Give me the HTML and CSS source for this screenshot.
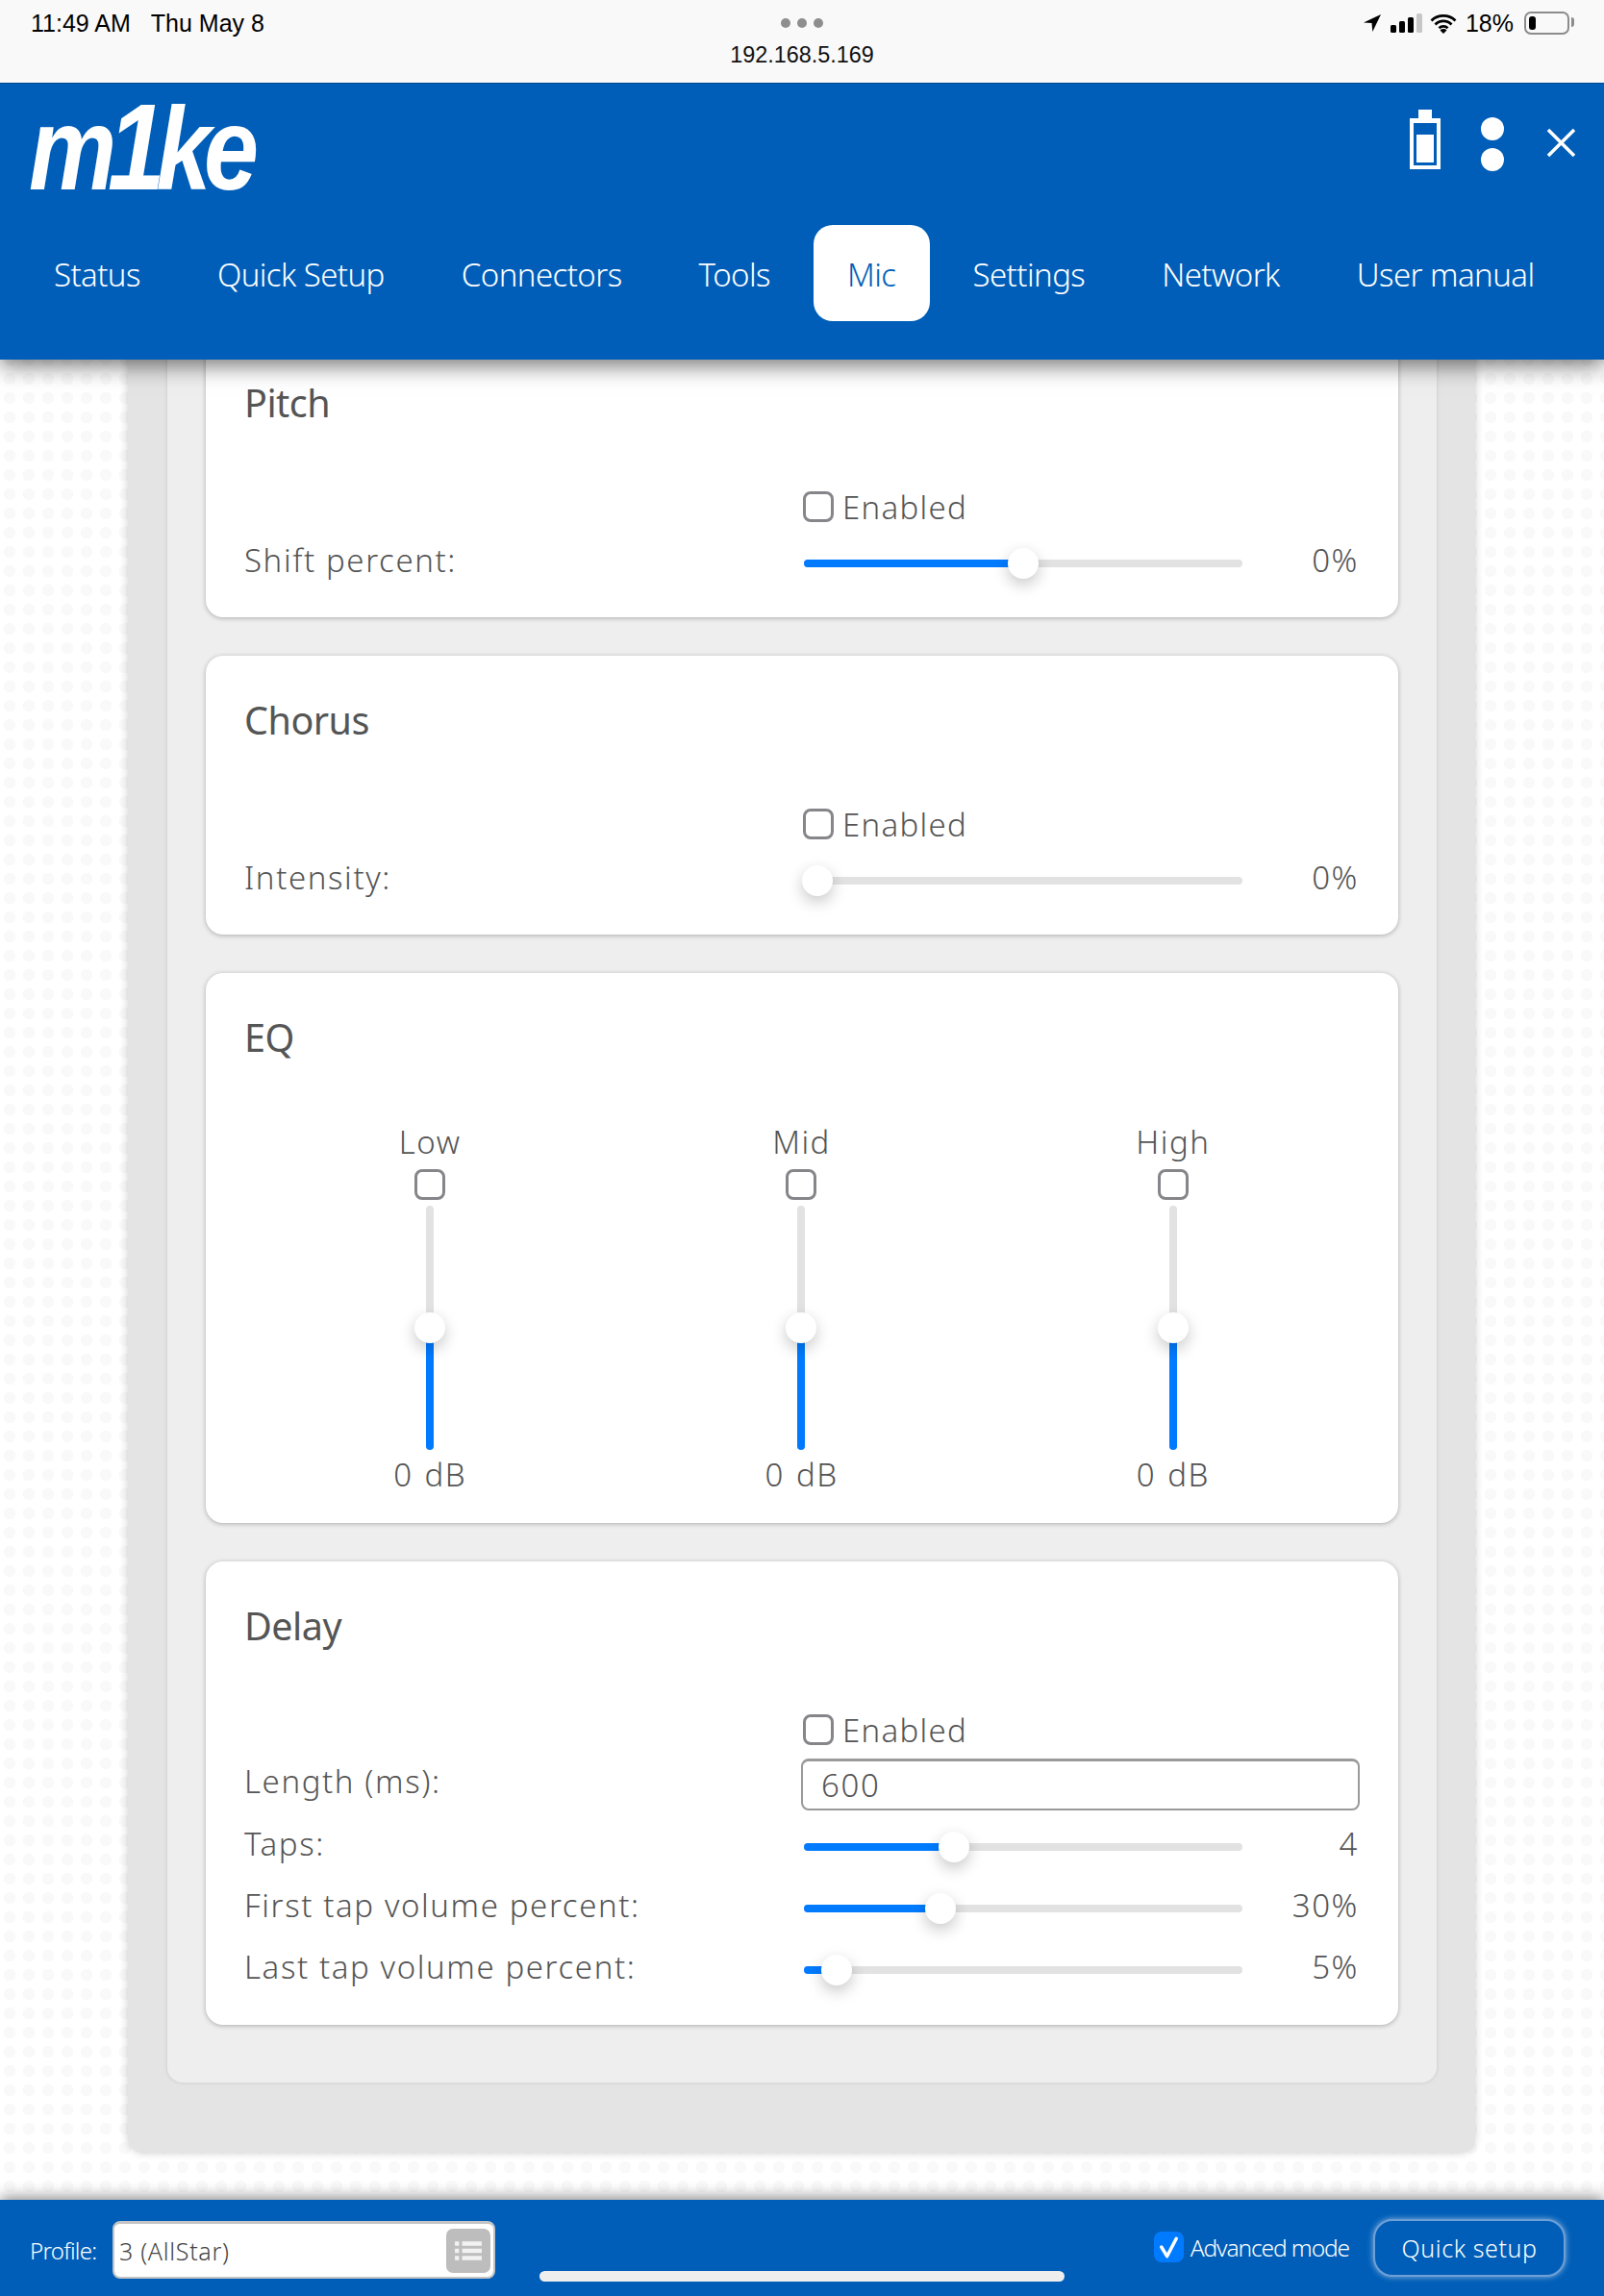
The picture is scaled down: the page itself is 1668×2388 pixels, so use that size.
FILE: index.html
```html
<!DOCTYPE html>
<html lang="en">
<head>
<meta charset="utf-8">
<title>m1ke</title>
<link rel="stylesheet" href="styles.css">
</head>
<body>
<div class="app">
  <div class="statusbar">
    <div class="sb-left"><span>11:49 AM</span><span>Thu May 8</span></div>
    <div class="sb-center">
      <div class="sb-dots"><i></i><i></i><i></i></div>
      <div class="sb-url">192.168.5.169</div>
    </div>
    <div class="sb-right">
      <svg class="ic-loc" viewBox="0 0 20 20"><path d="M19 1 1 9.500l8.500.6.8 8.900z" fill="#000"/></svg>
      <svg class="ic-signal" viewBox="0 0 33 20"><rect x="0" y="12" width="6" height="8" rx="1.500" fill="#000"/><rect x="9" y="8" width="6" height="12" rx="1.500" fill="#000"/><rect x="18" y="4" width="6" height="16" rx="1.500" fill="#000"/><rect x="27" y="0" width="6" height="20" rx="1.500" fill="#c8c8c8"/></svg>
      <svg class="ic-wifi" viewBox="0 0 28 21"><path d="M1.500 7.500a18 18 0 0 1 25 0M5.500 11.500a12 12 0 0 1 17 0M9.500 15.200a6.500 6.500 0 0 1 9 0" fill="none" stroke="#000" stroke-width="2.800"/><path d="M14 21l-3.500-3.500a5 5 0 0 1 7 0z" fill="#000"/></svg>
      <span>18%</span>
      <div class="sb-batt"><div class="sb-batt-fill"></div></div>
    </div>
  </div>

  <header class="header">
    <div class="header-top">
      <div class="logo"><span>m</span><span class="logo-one">1</span><span>ke</span></div>
      <div class="header-icons">
        <svg class="ic-batt" viewBox="0 0 32 62"><path d="M9 0h14v9h9v53H0V9h9z" fill="#fff"/><rect x="4" y="14" width="24" height="44" fill="#005eb8"/><rect x="7" y="26" width="18" height="29" fill="#fff"/></svg>
        <div class="ic-dots"><i></i><i></i></div>
        <svg class="ic-close" viewBox="0 0 31 31"><path d="M2 2l27 27M29 2 2 29" stroke="#fff" stroke-width="3.500" fill="none"/></svg>
      </div>
    </div>
    <nav class="nav">
      <a class="nav-item">Status</a>
      <a class="nav-item">Quick Setup</a>
      <a class="nav-item">Connectors</a>
      <a class="nav-item">Tools</a>
      <a class="nav-item nav-active">Mic</a>
      <a class="nav-item">Settings</a>
      <a class="nav-item">Network</a>
      <a class="nav-item">User manual</a>
    </nav>
  </header>

  <main class="main">
    <div class="outer">
      <div class="inner">

        <section class="card card-pitch">
          <h2 class="card-title">Pitch</h2>
          <div class="row row-check">
            <span></span>
            <label class="check"><span class="box"></span>Enabled</label>
          </div>
          <div class="row">
            <span class="label">Shift percent:</span>
            <div class="control">
              <div class="track"><div class="fill" style="width:50%"></div><div class="thumb" style="left:50%"></div></div>
              <span class="value">0%</span>
            </div>
          </div>
        </section>

        <section class="card card-pitch">
          <h2 class="card-title">Chorus</h2>
          <div class="row row-check">
            <span></span>
            <label class="check"><span class="box"></span>Enabled</label>
          </div>
          <div class="row">
            <span class="label">Intensity:</span>
            <div class="control">
              <div class="track"><div class="fill" style="width:3%"></div><div class="thumb" style="left:3%"></div></div>
              <span class="value">0%</span>
            </div>
          </div>
        </section>

        <section class="card card-eq">
          <h2 class="card-title">EQ</h2>
          <div class="eq-grid">
            <div class="eq-col">
              <span class="eq-label">Low</span>
              <span class="box"></span>
              <div class="vtrack"><div class="vfill" style="height:50%"></div><div class="vthumb" style="bottom:50%"></div></div>
              <span class="eq-value">0 dB</span>
            </div>
            <div class="eq-col">
              <span class="eq-label">Mid</span>
              <span class="box"></span>
              <div class="vtrack"><div class="vfill" style="height:50%"></div><div class="vthumb" style="bottom:50%"></div></div>
              <span class="eq-value">0 dB</span>
            </div>
            <div class="eq-col">
              <span class="eq-label">High</span>
              <span class="box"></span>
              <div class="vtrack"><div class="vfill" style="height:50%"></div><div class="vthumb" style="bottom:50%"></div></div>
              <span class="eq-value">0 dB</span>
            </div>
          </div>
        </section>

        <section class="card card-delay">
          <h2 class="card-title">Delay</h2>
          <div class="row row-check">
            <span></span>
            <label class="check"><span class="box"></span>Enabled</label>
          </div>
          <div class="row row-input">
            <span class="label">Length (ms):</span>
            <div class="textinput">600</div>
          </div>
          <div class="row row-tight">
            <span class="label">Taps:</span>
            <div class="control">
              <div class="track"><div class="fill" style="width:34.200%"></div><div class="thumb" style="left:34.200%"></div></div>
              <span class="value">4</span>
            </div>
          </div>
          <div class="row row-tight">
            <span class="label">First tap volume percent:</span>
            <div class="control">
              <div class="track"><div class="fill" style="width:31.100%"></div><div class="thumb" style="left:31.100%"></div></div>
              <span class="value">30%</span>
            </div>
          </div>
          <div class="row row-tight">
            <span class="label">Last tap volume percent:</span>
            <div class="control">
              <div class="track"><div class="fill" style="width:7.500%"></div><div class="thumb" style="left:7.500%"></div></div>
              <span class="value">5%</span>
            </div>
          </div>
        </section>

      </div>
    </div>
  </main>

  <footer class="footer">
    <div class="foot-left">
      <span class="foot-label">Profile:</span>
      <div class="profile">
        <span>3 (AllStar)</span>
        <div class="profile-btn">
          <svg viewBox="0 0 28 28"><path d="M1 5h4v4H1zM8 5h19v4H8zM1 12h4v4H1zM8 12h19v4H8zM1 19h4v4H1zM8 19h19v4H8z" fill="#f2f2f2"/></svg>
        </div>
      </div>
    </div>
    <div class="foot-right">
      <label class="adv">
        <span class="adv-box"><svg viewBox="0 0 32 32"><path d="M8 16l6 10L24 7" fill="none" stroke="#fff" stroke-width="3.600" stroke-linecap="round" stroke-linejoin="round"/></svg></span>
        Advanced mode
      </label>
      <button class="quick">Quick setup</button>
    </div>
    <div class="home"></div>
  </footer>
</div>
</body>
</html>
```

FILE: styles.css
```css
* { box-sizing: border-box; }
html, body { margin: 0; padding: 0; }
body { font-family: "Noto Sans", sans-serif; color: #555; background: #fff; }
.app { width: 1668px; height: 2388px; display: flex; flex-direction: column; overflow: hidden; }

/* iPad status bar */
.statusbar { height: 86px; background: #f9f9f9; position: relative; z-index: 3; display: flex; justify-content: space-between; padding: 10px 30px 0 32px; font-family: "Liberation Sans", sans-serif; font-size: 25px; color: #000; flex: none; }
.sb-left { display: flex; gap: 21px; height: 28px; align-items: center; }
.sb-center { position: absolute; left: 0; right: 0; top: 0; display: flex; flex-direction: column; align-items: center; }
.sb-dots { display: flex; gap: 7px; margin-top: 19px; }
.sb-dots i { width: 10px; height: 10px; border-radius: 50%; background: #8e8e8e; }
.sb-url { margin-top: 14px; font-size: 23.400px; line-height: 28px; color: #111; }
.sb-right { display: flex; align-items: center; height: 28px; }
.ic-loc { width: 20px; height: 20px; margin-right: 9px; }
.ic-signal { width: 33px; height: 20px; margin-right: 8px; }
.ic-wifi { width: 28px; height: 21px; margin-right: 9px; }
.sb-batt { position: relative; width: 47px; height: 24px; margin-left: 11px; margin-right: 6px; border: 2px solid #8c8c8c; border-radius: 7px; padding: 3px; }
.sb-batt::after { content: ""; position: absolute; right: -7px; top: 4px; width: 3px; height: 10px; background: #8c8c8c; border-radius: 0 3px 3px 0; }
.sb-batt-fill { width: 7px; height: 100%; background: #000; border-radius: 3px; }

/* Header */
.header { height: 288px; background: #005eb8; border-top: 1px solid #004a94; box-shadow: 0 6px 22px rgba(0,0,0,.55); position: relative; z-index: 2; flex: none; }
.header-top { height: 148px; display: flex; justify-content: space-between; }
.logo { margin: 0 0 0 30px; padding-top: 12px; height: 110px; font-family: "Liberation Sans", sans-serif; font-weight: 700; font-style: italic; font-size: 122px; line-height: 112px; color: #fff; letter-spacing: -9px; white-space: nowrap; transform: scaleX(.84); transform-origin: 0 0; }
.logo-one { font-size: 128px; line-height: 100px; margin-left: -2px; margin-right: -2px; }
.header-icons { display: flex; align-items: flex-start; padding: 27px 29px 0 0; }
.ic-batt { width: 32px; height: 62px; margin-right: 42px; }
.ic-dots { display: flex; flex-direction: column; gap: 8px; margin-top: 8px; margin-right: 44px; }
.ic-dots i { width: 24px; height: 24px; border-radius: 50%; background: #fff; }
.ic-close { width: 31px; height: 31px; margin-top: 19px; }
.nav { display: flex; gap: 10px; padding: 0 0 0 21px; margin-top: -1px; }
.nav-item { height: 100px; padding: 2px 35px 0; display: flex; align-items: center; color: #fff; font-size: 33px; font-weight: 300; border-radius: 20px; white-space: nowrap; letter-spacing: -.57px; }
.nav-active { background: #fff; color: #005eb8; }

/* Main */
.main { flex: 1; min-height: 0; overflow: hidden; background-color: #fff; background-image: radial-gradient(circle at 10px 10px, #f9f9f9 6px, transparent 6.500px); background-size: 20px 20px; background-position: 0 -10px; }
.outer { margin: -60px 134px 0 133px; height: 1925px; padding: 0 40px 0 41px; background: #e4e4e4; border-radius: 0 0 16px 16px; box-shadow: 0 0 8px rgba(0,0,0,.2); }
.inner { height: 1852px; padding: 38px 40px 0; background: #eee; border-radius: 0 0 16px 16px; box-shadow: 0 0 4px rgba(0,0,0,.12); display: flex; flex-direction: column; gap: 40px; }
.card { background: #fff; border-radius: 18px; box-shadow: 0 1px 5px rgba(0,0,0,.28); padding: 0 41px 0 40px; flex: none; }
.card-pitch { height: 290px; }
.card-eq { height: 572px; }
.card-delay { height: 482px; }
.card-title { margin: 0; padding-top: 44px; height: 146px; font-size: 39.500px; line-height: 46px; font-weight: 400; color: #555; letter-spacing: -.5px; }

.row { display: grid; grid-template-columns: 580px 1fr; align-items: center; font-size: 33px; letter-spacing: 1.600px; font-weight: 300; }
.row-check { height: 58.500px; margin-top: 3px; padding-bottom: 6.500px; }
.row-input { height: 58px; margin-top: -4.500px; }
.row-input .label { margin-bottom: 8px; }
.row-tight { height: 64px; }
.label { white-space: nowrap; }
.check { display: flex; align-items: center; gap: 9px; margin-left: 1px; letter-spacing: 1.300px; }
.box { display: block; width: 32px; height: 32px; border: 3px solid #85858a; border-radius: 8px; background: #fff; flex: none; }
.control { display: flex; align-items: center; justify-content: space-between; padding-top: 4px; }
.track { position: relative; width: 456px; height: 8px; margin: 4px 0 0 2px; border-radius: 4px; background: #e2e2e2; }
.fill { height: 100%; background: #007bff; border-radius: 4px; }
.thumb { position: absolute; top: 50%; width: 32px; height: 32px; margin: -16px 0 0 -16px; border-radius: 50%; background: #fff; box-shadow: 0 6px 16px rgba(0,0,0,.22); }
.value { margin-top: -4px; }
.textinput { height: 54px; border: 2px solid #9a9a9a; border-top-width: 3px; border-radius: 8px; margin: 0 -1px 0 -1px; padding: 0 19px; display: flex; align-items: center; }

/* EQ */
.eq-grid { display: grid; grid-template-columns: repeat(3, 1fr); margin-top: 8px; }
.eq-col { display: flex; flex-direction: column; align-items: center; font-size: 33px; font-weight: 300; letter-spacing: 1.500px; word-spacing: 2px; }
.eq-label { height: 46px; line-height: 43px; }
.eq-col .box { margin-top: 4px; }
.vtrack { position: relative; width: 8px; height: 254px; margin-top: 6px; border-radius: 4px; background: #e2e2e2; display: flex; align-items: flex-end; }
.vfill { width: 100%; background: #007bff; border-radius: 4px; }
.vthumb { position: absolute; left: 50%; width: 32px; height: 32px; margin: 0 0 -16px -16px; border-radius: 50%; background: #fff; box-shadow: 0 6px 16px rgba(0,0,0,.22); }
.eq-value { margin-top: 3px; height: 46px; line-height: 46px; }

/* Footer */
.footer { height: 100px; background: #005eb8; box-shadow: 0 -3px 14px rgba(0,0,0,.45); position: relative; z-index: 2; display: flex; justify-content: space-between; flex: none; padding: 20px 40px 0 31px; }
.foot-left { display: flex; align-items: center; height: 60px; gap: 18px; margin-top: 2px; }
.foot-label { color: #fff; font-size: 24px; font-weight: 300; letter-spacing: -.7px; width: 68px; white-space: nowrap; }
.profile { width: 398px; height: 60px; background: #fff; border: 2px solid #c4c4c4; border-top-width: 3px; border-radius: 8px; display: flex; align-items: center; justify-content: space-between; padding: 0 3px 0 5px; font-size: 25px; font-weight: 300; letter-spacing: .7px; color: #444; }
.profile-btn { width: 46px; height: 46px; background: #bdbdbd; border-radius: 7px; display: flex; align-items: center; justify-content: center; }
.profile-btn svg { width: 30px; height: 30px; }
.foot-right { display: flex; align-items: flex-start; }
.adv { display: flex; align-items: center; height: 32px; margin-top: 13px; color: #fff; font-size: 24.500px; font-weight: 300; letter-spacing: -1.100px; gap: 7px; }
.adv-box { width: 31px; height: 32px; border-radius: 8px; background: #007bff; display: block; }
.adv-box svg { display: block; width: 31px; height: 32px; }
.quick { width: 200px; height: 60px; margin-left: 25px; margin-top: 0; background: #005eb8; border: 2px solid #6e9fd6; box-shadow: 0 0 6px rgba(255,255,255,.55); border-radius: 20px; color: #fff; font-family: "Noto Sans", sans-serif; font-weight: 300; font-size: 25px; letter-spacing: .6px; padding: 0; }
.home { position: absolute; left: 561px; top: 74px; width: 546px; height: 11px; border-radius: 6px; background: #eee; }
```
